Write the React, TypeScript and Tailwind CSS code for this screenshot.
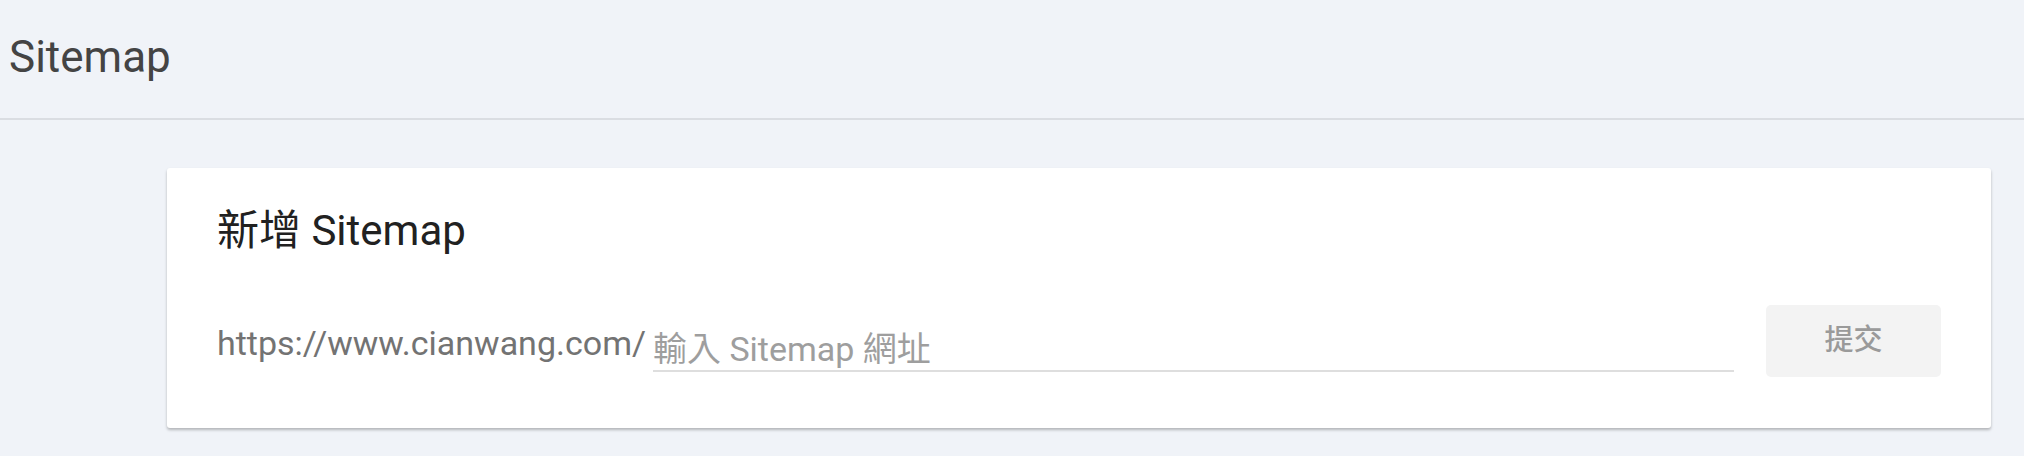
import { useState } from "react";

export default function App() {
    const [url, setUrl] = useState("");

    return (
        <div className="min-h-[456px] bg-[#f0f3f8] font-['Roboto','Noto_Sans_CJK_TC',sans-serif]">
            {/* Cabeçalho da página */}
            <div className="h-[120px] border-b-2 border-[#dadde2] pl-[9px] pt-[31px]">
                <h1 className="text-[44px] leading-[52px] font-normal text-[#444]">Sitemap</h1>
            </div>

            <div className="pl-[167px] pr-[33px] pt-[48px] pb-[28px]">
                <div className="bg-white rounded-[3px] shadow-[0_2px_3px_rgba(0,0,0,0.26)] px-[50px] pt-[38px] pb-[51px]">
                    <h2 className="text-[42px] leading-[50px] text-[#212121]">新增 Sitemap</h2>

                    <div className="flex items-start mt-[49px] h-[72px]">
                        <span className="mt-[18px] text-[34px] leading-[40px] text-[#737373] whitespace-nowrap">
                            https://www.cianwang.com/
                        </span>
                        <input
                            type="text"
                            value={url}
                            onChange={(e) => setUrl(e.target.value)}
                            placeholder="輸入 Sitemap 網址"
                            className="flex-1 min-w-0 ml-[7px] mt-[23px] h-[44px] p-0 text-[34px] leading-[40px] text-[#333] placeholder:text-[#9e9e9e] bg-transparent border-b-2 border-[#dedede] outline-none"
                        />
                        <button
                            type="button"
                            disabled={!url}
                            className="ml-[32px] w-[175px] h-[72px] rounded-[5px] bg-[#f3f3f3] text-[29px] font-medium text-[#9a9a9a]"
                        >
                            提交
                        </button>
                    </div>
                </div>
            </div>
        </div>
    );
}
